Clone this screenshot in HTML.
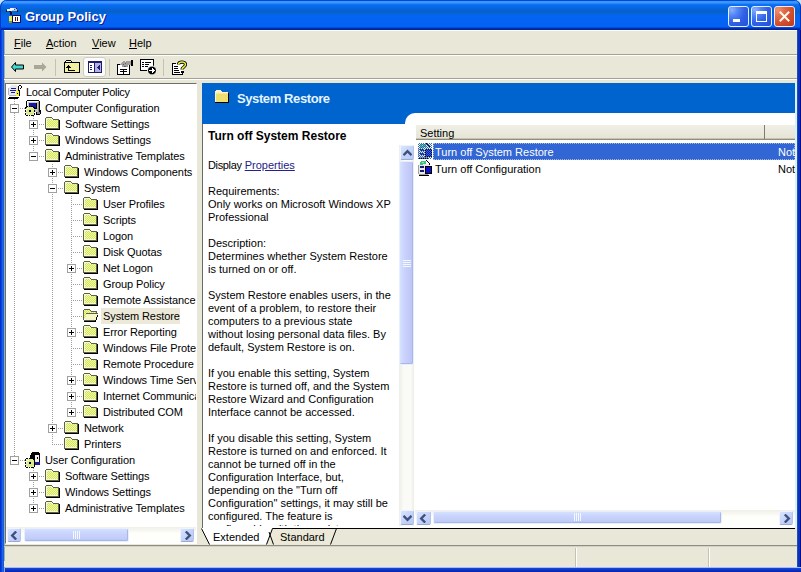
<!DOCTYPE html>
<html><head><meta charset="utf-8">
<style>
*{margin:0;padding:0;box-sizing:border-box}
html,body{width:801px;height:572px;overflow:hidden;background:#C4E6F8}
body{position:relative;font-family:"Liberation Sans",sans-serif;font-size:11px;color:#000}
.a{position:absolute}
svg{display:block}
#title{left:0;top:0;width:801px;height:30px;border-radius:7px 7px 0 0;box-shadow:inset 1px 0 0 #0038C8,inset -1px 0 0 #0030B8;
background:linear-gradient(to bottom,#0048D0 0px,#0048D0 1px,#3C98FF 1px,#3A96FF 3px,#1478F6 4px,#0A6CF0 5px,#0868EA 7px,#0464D4 9px,#0462CC 12px,#0464E0 14px,#0464F4 16px,#0462F2 27px,#0036BE 28px,#001C92 30px)}
#ttext{left:25px;top:8px;font-weight:bold;font-size:13px;color:#fff;text-shadow:1px 1px 0 #0A1B8C;line-height:17px}
.fl{background:#0A46DA}
.menu{top:35px;line-height:17px}
.u{text-decoration:underline}
.sep{background:#A4A294}
.ti{position:absolute;height:16px;line-height:16px;white-space:nowrap;letter-spacing:-0.1px}
.ti.sel{background:#ECE9D8;padding:0 1px 0 2px;line-height:16px}
.ic{position:absolute;width:16px;height:16px}
.ex{position:absolute;width:9px;height:9px;border:1px solid #A0A0A0;background:#fff}
.ex:before{content:"";position:absolute;left:1px;top:3px;width:5px;height:1px;background:#000}
.ex.p:after{content:"";position:absolute;left:3px;top:1px;width:1px;height:5px;background:#000}
.vd{position:absolute;width:1px;background-image:linear-gradient(to bottom,#A0A0A0 50%,transparent 50%);background-size:1px 2px}
.hd{position:absolute;height:1px;background-image:linear-gradient(to right,#A0A0A0 50%,transparent 50%);background-size:2px 1px}
.dl{line-height:13px;white-space:nowrap}
.sb{position:absolute;border-radius:2px;background:linear-gradient(135deg,#D8E4FE 0%,#C6D4FA 50%,#B8C8F4 100%);border-top:1px solid #EEF3FF;border-left:1px solid #EEF3FF;border-right:1px solid #B4C4EC;border-bottom:1px solid #9AAAD4}
.th{position:absolute;border-radius:2px;background:linear-gradient(to bottom,#D6E0FE 0%,#CAD6FC 30%,#C4CEFA 70%,#B8C6F2 100%);border:1px solid #E8EEFF;box-shadow:inset -1px -1px 0 #A8B8E4}
.tr{position:absolute;background:linear-gradient(to bottom,#F0EFE8,#FEFEFA 40%,#FEFEFA)}

</style></head><body>
<svg width="0" height="0" style="position:absolute"><defs><pattern id="fd" width="2" height="2" patternUnits="userSpaceOnUse"><rect width="2" height="2" fill="#F2F6B8"/><rect width="1" height="1" fill="#D2E84A"/><rect x="1" y="1" width="1" height="1" fill="#D2E84A"/></pattern></defs></svg>
<div class="a" id="title"></div>
<div class="a" style="left:6px;top:7px"><svg width="16" height="18" shape-rendering="crispEdges"><path fill="#F4F4F4" d="M1 2h3v2H1zM4 1h4v3H4z"/><path fill="#B8B8C8" d="M8 1h2v1H8zM9 2h2v2H9zM6 3h3v1H6z"/><path fill="#10104A" d="M0 3h1v2H0zM3 4h2v1H3zM10 1h1v1h-1zM11 3h1v2h-1zM4 5h2v3H4zM6 8h9v1H6zM6 9h1v7H6zM14 9h1v7h-1zM6 15h9v1H6z"/><path fill="#fff" d="M7 9h7v6H7z"/><path fill="#5A0A20" d="M9 10h1v4H9zM11 10h1v4h-1z"/><path fill="#E6EC50" d="M3 9h3v6H3z"/><path fill="#8A9A20" d="M3 14h3v2H3z"/></svg></div>
<div class="a" id="ttext">Group Policy</div>
<!-- caption buttons -->
<div class="a" style="left:728px;top:6px;width:21px;height:21px;border:1px solid #E4F0FF;border-radius:3px;background:radial-gradient(circle at 15% 15%,#88B0FF 0%,#5486F6 25%,#3062E6 55%,#2250D6 100%)"><div class="a" style="left:4px;top:12px;width:7px;height:3px;background:#fff"></div></div>
<div class="a" style="left:751px;top:6px;width:21px;height:21px;border:1px solid #E4F0FF;border-radius:3px;background:radial-gradient(circle at 15% 15%,#88B0FF 0%,#5486F6 25%,#3062E6 55%,#2250D6 100%)"><div class="a" style="left:4px;top:4px;width:11px;height:11px;border:1px solid #fff;border-top-width:3px"></div></div>
<div class="a" style="left:774px;top:6px;width:21px;height:21px;border:1px solid #F4E8F0;border-radius:3px;background:radial-gradient(circle at 15% 15%,#F09070 0%,#E06A48 30%,#D24E2C 60%,#C23818 100%)"><svg class="a" style="left:4px;top:4px" width="11" height="11"><path d="M1.5 1.5L9.5 9.5M9.5 1.5L1.5 9.5" stroke="#FFF8EE" stroke-width="2" stroke-linecap="square"/></svg></div>
<!-- frame -->

<div class="a" style="left:797px;top:30px;width:4px;height:542px;background:linear-gradient(to right,#2050B0 0,#2050B0 1px,#0A30C0 1px,#0A30C0 3px,#000C8C 3px,#000C8C 4px)"></div>
<div class="a" style="left:0;top:567px;width:801px;height:5px;background:linear-gradient(to bottom,#9CC0FF 0,#9CC0FF 1px,#1848DC 1px,#0C34C8 3px,#0A22A8 5px)"></div>
<div class="a" style="left:4px;top:30px;width:793px;height:537px;background:#E9E8D8"></div>
<div class="a" style="left:0;top:30px;width:5px;height:542px;background:linear-gradient(to right,#0030D0 0,#0030D0 1px,#0844E0 1px,#0844E0 2px,#1A64EA 2px,#1A64EA 3px,#1A5ECC 3px,#1A5ECC 4px,#98ACC8 4px,#98ACC8 5px)"></div>
<!-- menu -->
<div class="a" style="left:4px;top:30px;width:793px;height:1px;background:#FFFFFF"></div>
<div class="a menu" style="left:14px"><span class="u">F</span>ile</div>
<div class="a menu" style="left:46px"><span class="u">A</span>ction</div>
<div class="a menu" style="left:92px"><span class="u">V</span>iew</div>
<div class="a menu" style="left:129px"><span class="u">H</span>elp</div>
<div class="a sep" style="left:4px;top:54px;width:793px;height:1px"></div>
<div class="a" style="left:4px;top:55px;width:793px;height:1px;background:#fff"></div>
<!-- toolbar -->
<div class="a" style="left:55px;top:59px;width:1px;height:17px;background:#C5C2B2"></div>
<div class="a" style="left:109px;top:59px;width:1px;height:17px;background:#C5C2B2"></div>
<div class="a" style="left:163px;top:59px;width:1px;height:17px;background:#C5C2B2"></div>
<div class="a" style="left:83px;top:57px;width:23px;height:20px;border:1px solid #CFCDC0;border-radius:3px;background:#FCFCFA"></div>
<div class="a" id="tb_icons" style="left:4px;top:56px">
<svg class="a" style="left:7px;top:6px" width="14" height="12" shape-rendering="crispEdges"><path d="M4.5 0.5L0.5 5L4.5 9.5V7H12.5V3H4.5Z" fill="#3ED8D0" stroke="#000" stroke-width="1" shape-rendering="auto"/></svg>
<svg class="a" style="left:29px;top:6px" width="15" height="12"><path d="M1 3H9V0.5L13.5 5L9 9.5V7H1Z" fill="#A9A896"/></svg>
<svg class="a" style="left:60px;top:4px" width="16" height="14" shape-rendering="crispEdges"><path fill="#F2F0A0" d="M1 3h14v9H1z"/><path fill="#000" d="M2 0h5v1H2zM1 1h1v1H1zM7 1h1v1H7zM0 2h15v1H0zM0 3h1v10H0zM15 2h1v11h-1zM0 12h16v1H0zM4 5h1v6H4zM2 7h1v1H2zM3 6h1v2H3zM5 6h1v2H5zM6 7h1v1H6zM5 10h6v1H5z"/><path fill="#FAFAF0" d="M2 1h5v1H2z"/></svg>
<svg class="a" style="left:84px;top:5px" width="14" height="12" shape-rendering="crispEdges"><path fill="#1C1C70" d="M0 0h14v12H0z"/><path fill="#fff" d="M1 2h5v9H1z"/><path fill="#B4B0E4" d="M7 2h6v9H7z"/><path fill="#1C1C70" d="M2 4h2v1H2zM2 6h2v1H2zM2 8h2v1H2zM9 6h1v1H9zM10 5h1v3h-1zM11 4h1v5h-1z"/></svg>
<svg class="a" style="left:113px;top:4px" width="17" height="15" shape-rendering="crispEdges"><path fill="#fff" d="M1 5h11v9H1z"/><path fill="#000" d="M0 4h3v1H0zM0 5h1v10H0zM12 5h1v10h-1zM0 14h13v1H0zM3 9h7v1H3zM3 11h7v1H3zM6 9h1v5H6z"/><path fill="#A0A0A0" d="M6 1h2v1H6zM5 2h4v1H5zM4 3h6v1H4zM3 4h9v1H3zM5 5h6v2H5zM9 1h5v4H9z"/><path fill="#606060" d="M6 4h1v1H6zM8 3h1v1H8zM7 6h2v1H7z"/><path fill="#000" d="M14 0h2v6h-2z"/></svg>
<svg class="a" style="left:136px;top:3px" width="17" height="16" shape-rendering="crispEdges"><path fill="#fff" d="M1 1h12v10H1z"/><path fill="#000" d="M0 0h14v1H0zM0 1h1v11H0zM13 1h1v6h-1zM0 11h7v1H0zM2 3h2v1H2zM5 3h6v1H5zM2 5h2v1H2zM5 5h4v1H5zM2 7h2v1H2zM5 7h3v1H5z"/><circle cx="12" cy="11.5" r="4.5" fill="#000" stroke="#fff" stroke-width="1" shape-rendering="auto"/><path fill="#fff" d="M9 11h3v1H9zM12 9h1v5h-1zM13 10h1v3h-1zM14 11h1v1h-1z"/></svg>
<svg class="a" style="left:168px;top:4px" width="15" height="15" shape-rendering="crispEdges"><path fill="#fff" d="M1 4h10v10H1z"/><path fill="#000" d="M0 3h4v1H0zM0 4h1v11H0zM10 11h1v4h-1zM0 14h11v1H0zM2 6h4v1H2zM2 8h4v1H2zM2 10h5v1H2zM2 12h6v1H2z"/><path d="M6.5 4.5C6.5 1.5 13.5 1 13.5 4.5C13.5 7 10 7 10 9.5" fill="none" stroke="#000" stroke-width="3.2" shape-rendering="auto"/><path d="M6.5 4.5C6.5 1.5 13.5 1 13.5 4.5C13.5 7 10 7 10 9.5" fill="none" stroke="#E4EC40" stroke-width="1.6" shape-rendering="auto"/><path fill="#000" d="M9 11h3v2H9z"/></svg>
</div>
<div class="a sep" style="left:4px;top:78px;width:793px;height:1px"></div>
<div class="a" style="left:4px;top:79px;width:793px;height:1px;background:#fff"></div>
<!-- tree frame -->
<div class="a" style="left:5px;top:83px;width:192px;height:461px;border-top:1px solid #6A706C;border-left:1px solid #6A706C;border-right:1px solid #FFF;border-bottom:1px solid #FFF;background:#fff"></div>
<!-- status bar -->
<div class="a" style="left:4px;top:545px;width:793px;height:1px;background:#8E8D82"></div>
<div class="a" style="left:4px;top:546px;width:793px;height:1px;background:#D2D1C4"></div>
<div class="a" style="left:4px;top:561px;width:793px;height:6px;background:linear-gradient(to bottom,#E9E8D8,#EEE6D8)"></div>
<div class="a" style="left:575px;top:548px;width:1px;height:19px;background:#C5C2B2"></div>
<div class="a" style="left:576px;top:548px;width:1px;height:19px;background:#fff"></div>
<div class="a" style="left:708px;top:548px;width:1px;height:19px;background:#C5C2B2"></div>
<div class="a" style="left:709px;top:548px;width:1px;height:19px;background:#fff"></div>
<div class="a" style="left:6px;top:84px;width:190px;height:443px;overflow:hidden;background:#fff">
<div class="vd" style="left:8px;top:15px;height:361px"></div>
<div class="vd" style="left:27px;top:32px;height:40px"></div>
<div class="vd" style="left:27px;top:384px;height:40px"></div>
<div class="vd" style="left:46px;top:80px;height:280px"></div>
<div class="vd" style="left:65px;top:112px;height:216px"></div>
<div class="ic" style="left:2px;top:0px"><svg width="16" height="16" shape-rendering="crispEdges"><path fill="#E8E8EE" d="M3 1h6v1H3zM2 2h8v1H2zM1 3h9v9H1z"/><path fill="#B4B4C0" d="M0 4h1v7H0zM1 11h7v1H1z"/><path fill="#1A1A9A" d="M3 4h5v1H3zM2 6h6v1H2zM3 8h4v1H3z"/><path fill="#F0F040" d="M8 6h3v6H8z"/><path fill="#000" d="M10 2h1v1h-1zM11 1h2v1h-2zM13 2h1v2h-1zM12 4h1v1h-1zM10 3h1v4h-1zM11 6h1v6h-1zM9 9h1v1H9zM1 13h10v1H1zM0 14h10v1H0z"/><path fill="#fff" d="M11 2h2v2h-2z"/></svg>
</div>
<div class="ti" style="left:20px;top:0px;letter-spacing:-0.3px">Local Computer Policy</div>
<div class="hd" style="left:8px;top:24px;width:11px"></div>
<div class="ex" style="left:4px;top:20px"></div>
<div class="ic" style="left:19px;top:16px"><svg width="16" height="16" shape-rendering="crispEdges"><path fill="#000" d="M2 0h12v1H2zM1 1h1v10H1zM14 1h1v12h-1zM11 12h4v1h-4zM11 13h1v2h-1zM15 10h1v4h-1zM12 14h3v1h-3z"/><path fill="#C8C8C8" d="M2 1h12v11H2z"/><path fill="#fff" d="M2 1h11v1H2zM2 2h1v7H2z"/><path fill="#909090" d="M13 2h1v10h-1zM12 12h3v2h-3z"/><path fill="#1818A8" d="M4 3h7v5H4z"/><path fill="#000" d="M4 8h7v1H4zM11 3h1v6h-1z"/><path fill="#DDEB8C" d="M2 7h6v1h-6zM1 8h8v6h-8zM2 14h6v1h-6z"/><path fill="#F6FCD0" d="M2 8h2v1h-2zM1 9h1v2h-1z"/><path fill="#000" d="M1 6h1v1h-1zM4 6h1v1h-1zM7 6h1v1h-1zM0 7h1v1h-1zM8 7h1v1h-1zM0 10h1v1h-1zM9 10h1v1h-1zM0 11h1v1h-1zM9 11h1v1h-1zM0 14h1v1h-1zM9 14h1v1h-1zM1 15h1v1h-1zM4 15h1v1h-1zM7 15h1v1h-1zM4 10h1v1h-1zM5 10h1v1h-1zM4 11h1v1h-1zM5 11h1v1h-1zM2 6h1v1h-1zM6 6h1v1h-1zM0 8h1v1h-1zM0 13h1v1h-1zM9 8h1v1h-1zM9 13h1v1h-1zM2 15h1v1h-1zM6 15h1v1h-1zM8 15h1v1h-1zM9 7h1v1h-1z"/></svg>
</div>
<div class="ti" style="left:39px;top:16px">Computer Configuration</div>
<div class="hd" style="left:27px;top:40px;width:12px"></div>
<div class="ex p" style="left:23px;top:36px"></div>
<div class="ic" style="left:39px;top:32px"><svg width="16" height="16" shape-rendering="crispEdges"><path fill="url(#fd)" d="M2 3h11v9H2z"/><path fill="#F6F8D0" d="M1 2h6v1H1zM1 3h1v9H1zM7 3h6v1H7zM2 11h11v1H2z"/><path fill="#5E604A" d="M1 1h6v1H1zM0 2h1v10H0zM7 2h1v1H7zM8 3h5v1H8zM13 3h1v10h-1zM0 12h14v1H0z"/><path fill="#000" d="M14 4h1v10h-1zM1 13h14v1H1z"/></svg>
</div>
<div class="ti" style="left:59px;top:32px">Software Settings</div>
<div class="hd" style="left:27px;top:56px;width:12px"></div>
<div class="ex p" style="left:23px;top:52px"></div>
<div class="ic" style="left:39px;top:48px"><svg width="16" height="16" shape-rendering="crispEdges"><path fill="url(#fd)" d="M2 3h11v9H2z"/><path fill="#F6F8D0" d="M1 2h6v1H1zM1 3h1v9H1zM7 3h6v1H7zM2 11h11v1H2z"/><path fill="#5E604A" d="M1 1h6v1H1zM0 2h1v10H0zM7 2h1v1H7zM8 3h5v1H8zM13 3h1v10h-1zM0 12h14v1H0z"/><path fill="#000" d="M14 4h1v10h-1zM1 13h14v1H1z"/></svg>
</div>
<div class="ti" style="left:59px;top:48px">Windows Settings</div>
<div class="hd" style="left:27px;top:72px;width:12px"></div>
<div class="ex" style="left:23px;top:68px"></div>
<div class="ic" style="left:39px;top:64px"><svg width="16" height="16" shape-rendering="crispEdges"><path fill="url(#fd)" d="M2 3h11v9H2z"/><path fill="#F6F8D0" d="M1 2h6v1H1zM1 3h1v9H1zM7 3h6v1H7zM2 11h11v1H2z"/><path fill="#5E604A" d="M1 1h6v1H1zM0 2h1v10H0zM7 2h1v1H7zM8 3h5v1H8zM13 3h1v10h-1zM0 12h14v1H0z"/><path fill="#000" d="M14 4h1v10h-1zM1 13h14v1H1z"/></svg>
</div>
<div class="ti" style="left:59px;top:64px">Administrative Templates</div>
<div class="hd" style="left:46px;top:88px;width:12px"></div>
<div class="ex p" style="left:42px;top:84px"></div>
<div class="ic" style="left:58px;top:80px"><svg width="16" height="16" shape-rendering="crispEdges"><path fill="url(#fd)" d="M2 3h11v9H2z"/><path fill="#F6F8D0" d="M1 2h6v1H1zM1 3h1v9H1zM7 3h6v1H7zM2 11h11v1H2z"/><path fill="#5E604A" d="M1 1h6v1H1zM0 2h1v10H0zM7 2h1v1H7zM8 3h5v1H8zM13 3h1v10h-1zM0 12h14v1H0z"/><path fill="#000" d="M14 4h1v10h-1zM1 13h14v1H1z"/></svg>
</div>
<div class="ti" style="left:78px;top:80px">Windows Components</div>
<div class="hd" style="left:46px;top:104px;width:12px"></div>
<div class="ex" style="left:42px;top:100px"></div>
<div class="ic" style="left:58px;top:96px"><svg width="16" height="16" shape-rendering="crispEdges"><path fill="url(#fd)" d="M2 3h11v9H2z"/><path fill="#F6F8D0" d="M1 2h6v1H1zM1 3h1v9H1zM7 3h6v1H7zM2 11h11v1H2z"/><path fill="#5E604A" d="M1 1h6v1H1zM0 2h1v10H0zM7 2h1v1H7zM8 3h5v1H8zM13 3h1v10h-1zM0 12h14v1H0z"/><path fill="#000" d="M14 4h1v10h-1zM1 13h14v1H1z"/></svg>
</div>
<div class="ti" style="left:78px;top:96px">System</div>
<div class="hd" style="left:65px;top:120px;width:12px"></div>
<div class="ic" style="left:77px;top:112px"><svg width="16" height="16" shape-rendering="crispEdges"><path fill="url(#fd)" d="M2 3h11v9H2z"/><path fill="#F6F8D0" d="M1 2h6v1H1zM1 3h1v9H1zM7 3h6v1H7zM2 11h11v1H2z"/><path fill="#5E604A" d="M1 1h6v1H1zM0 2h1v10H0zM7 2h1v1H7zM8 3h5v1H8zM13 3h1v10h-1zM0 12h14v1H0z"/><path fill="#000" d="M14 4h1v10h-1zM1 13h14v1H1z"/></svg>
</div>
<div class="ti" style="left:97px;top:112px">User Profiles</div>
<div class="hd" style="left:65px;top:136px;width:12px"></div>
<div class="ic" style="left:77px;top:128px"><svg width="16" height="16" shape-rendering="crispEdges"><path fill="url(#fd)" d="M2 3h11v9H2z"/><path fill="#F6F8D0" d="M1 2h6v1H1zM1 3h1v9H1zM7 3h6v1H7zM2 11h11v1H2z"/><path fill="#5E604A" d="M1 1h6v1H1zM0 2h1v10H0zM7 2h1v1H7zM8 3h5v1H8zM13 3h1v10h-1zM0 12h14v1H0z"/><path fill="#000" d="M14 4h1v10h-1zM1 13h14v1H1z"/></svg>
</div>
<div class="ti" style="left:97px;top:128px">Scripts</div>
<div class="hd" style="left:65px;top:152px;width:12px"></div>
<div class="ic" style="left:77px;top:144px"><svg width="16" height="16" shape-rendering="crispEdges"><path fill="url(#fd)" d="M2 3h11v9H2z"/><path fill="#F6F8D0" d="M1 2h6v1H1zM1 3h1v9H1zM7 3h6v1H7zM2 11h11v1H2z"/><path fill="#5E604A" d="M1 1h6v1H1zM0 2h1v10H0zM7 2h1v1H7zM8 3h5v1H8zM13 3h1v10h-1zM0 12h14v1H0z"/><path fill="#000" d="M14 4h1v10h-1zM1 13h14v1H1z"/></svg>
</div>
<div class="ti" style="left:97px;top:144px">Logon</div>
<div class="hd" style="left:65px;top:168px;width:12px"></div>
<div class="ic" style="left:77px;top:160px"><svg width="16" height="16" shape-rendering="crispEdges"><path fill="url(#fd)" d="M2 3h11v9H2z"/><path fill="#F6F8D0" d="M1 2h6v1H1zM1 3h1v9H1zM7 3h6v1H7zM2 11h11v1H2z"/><path fill="#5E604A" d="M1 1h6v1H1zM0 2h1v10H0zM7 2h1v1H7zM8 3h5v1H8zM13 3h1v10h-1zM0 12h14v1H0z"/><path fill="#000" d="M14 4h1v10h-1zM1 13h14v1H1z"/></svg>
</div>
<div class="ti" style="left:97px;top:160px">Disk Quotas</div>
<div class="hd" style="left:65px;top:184px;width:12px"></div>
<div class="ex p" style="left:61px;top:180px"></div>
<div class="ic" style="left:77px;top:176px"><svg width="16" height="16" shape-rendering="crispEdges"><path fill="url(#fd)" d="M2 3h11v9H2z"/><path fill="#F6F8D0" d="M1 2h6v1H1zM1 3h1v9H1zM7 3h6v1H7zM2 11h11v1H2z"/><path fill="#5E604A" d="M1 1h6v1H1zM0 2h1v10H0zM7 2h1v1H7zM8 3h5v1H8zM13 3h1v10h-1zM0 12h14v1H0z"/><path fill="#000" d="M14 4h1v10h-1zM1 13h14v1H1z"/></svg>
</div>
<div class="ti" style="left:97px;top:176px">Net Logon</div>
<div class="hd" style="left:65px;top:200px;width:12px"></div>
<div class="ic" style="left:77px;top:192px"><svg width="16" height="16" shape-rendering="crispEdges"><path fill="url(#fd)" d="M2 3h11v9H2z"/><path fill="#F6F8D0" d="M1 2h6v1H1zM1 3h1v9H1zM7 3h6v1H7zM2 11h11v1H2z"/><path fill="#5E604A" d="M1 1h6v1H1zM0 2h1v10H0zM7 2h1v1H7zM8 3h5v1H8zM13 3h1v10h-1zM0 12h14v1H0z"/><path fill="#000" d="M14 4h1v10h-1zM1 13h14v1H1z"/></svg>
</div>
<div class="ti" style="left:97px;top:192px">Group Policy</div>
<div class="hd" style="left:65px;top:216px;width:12px"></div>
<div class="ic" style="left:77px;top:208px"><svg width="16" height="16" shape-rendering="crispEdges"><path fill="url(#fd)" d="M2 3h11v9H2z"/><path fill="#F6F8D0" d="M1 2h6v1H1zM1 3h1v9H1zM7 3h6v1H7zM2 11h11v1H2z"/><path fill="#5E604A" d="M1 1h6v1H1zM0 2h1v10H0zM7 2h1v1H7zM8 3h5v1H8zM13 3h1v10h-1zM0 12h14v1H0z"/><path fill="#000" d="M14 4h1v10h-1zM1 13h14v1H1z"/></svg>
</div>
<div class="ti" style="left:97px;top:208px">Remote Assistance</div>
<div class="hd" style="left:65px;top:232px;width:12px"></div>
<div class="ic" style="left:77px;top:224px"><svg width="16" height="16" shape-rendering="crispEdges"><path fill="url(#fd)" d="M1 2h7v1h5v3H4l-3 6z"/><path fill="#F4F6C8" d="M4 6h11l-3 7H1z"/><path fill="#5E604A" d="M1 1h6v1H1zM0 2h1v10H0zM7 2h1v1H7zM8 3h5v1H8zM13 3h1v3h-1zM3 5h12v1H3zM1 12h11v1H1z"/><path fill="#000" d="M12 12h1v1h-1zM13 9h1v3h-1zM14 7h1v2h-1zM1 13h12v1H1z"/></svg>
</div>
<div class="a" style="left:95px;top:224px;width:79px;height:16px;background:#ECE9D8"></div>
<div class="ti" style="left:97px;top:224px">System Restore</div>
<div class="hd" style="left:65px;top:248px;width:12px"></div>
<div class="ex p" style="left:61px;top:244px"></div>
<div class="ic" style="left:77px;top:240px"><svg width="16" height="16" shape-rendering="crispEdges"><path fill="url(#fd)" d="M2 3h11v9H2z"/><path fill="#F6F8D0" d="M1 2h6v1H1zM1 3h1v9H1zM7 3h6v1H7zM2 11h11v1H2z"/><path fill="#5E604A" d="M1 1h6v1H1zM0 2h1v10H0zM7 2h1v1H7zM8 3h5v1H8zM13 3h1v10h-1zM0 12h14v1H0z"/><path fill="#000" d="M14 4h1v10h-1zM1 13h14v1H1z"/></svg>
</div>
<div class="ti" style="left:97px;top:240px">Error Reporting</div>
<div class="hd" style="left:65px;top:264px;width:12px"></div>
<div class="ic" style="left:77px;top:256px"><svg width="16" height="16" shape-rendering="crispEdges"><path fill="url(#fd)" d="M2 3h11v9H2z"/><path fill="#F6F8D0" d="M1 2h6v1H1zM1 3h1v9H1zM7 3h6v1H7zM2 11h11v1H2z"/><path fill="#5E604A" d="M1 1h6v1H1zM0 2h1v10H0zM7 2h1v1H7zM8 3h5v1H8zM13 3h1v10h-1zM0 12h14v1H0z"/><path fill="#000" d="M14 4h1v10h-1zM1 13h14v1H1z"/></svg>
</div>
<div class="ti" style="left:97px;top:256px">Windows File Protection</div>
<div class="hd" style="left:65px;top:280px;width:12px"></div>
<div class="ic" style="left:77px;top:272px"><svg width="16" height="16" shape-rendering="crispEdges"><path fill="url(#fd)" d="M2 3h11v9H2z"/><path fill="#F6F8D0" d="M1 2h6v1H1zM1 3h1v9H1zM7 3h6v1H7zM2 11h11v1H2z"/><path fill="#5E604A" d="M1 1h6v1H1zM0 2h1v10H0zM7 2h1v1H7zM8 3h5v1H8zM13 3h1v10h-1zM0 12h14v1H0z"/><path fill="#000" d="M14 4h1v10h-1zM1 13h14v1H1z"/></svg>
</div>
<div class="ti" style="left:97px;top:272px">Remote Procedure Call</div>
<div class="hd" style="left:65px;top:296px;width:12px"></div>
<div class="ex p" style="left:61px;top:292px"></div>
<div class="ic" style="left:77px;top:288px"><svg width="16" height="16" shape-rendering="crispEdges"><path fill="url(#fd)" d="M2 3h11v9H2z"/><path fill="#F6F8D0" d="M1 2h6v1H1zM1 3h1v9H1zM7 3h6v1H7zM2 11h11v1H2z"/><path fill="#5E604A" d="M1 1h6v1H1zM0 2h1v10H0zM7 2h1v1H7zM8 3h5v1H8zM13 3h1v10h-1zM0 12h14v1H0z"/><path fill="#000" d="M14 4h1v10h-1zM1 13h14v1H1z"/></svg>
</div>
<div class="ti" style="left:97px;top:288px">Windows Time Service</div>
<div class="hd" style="left:65px;top:312px;width:12px"></div>
<div class="ex p" style="left:61px;top:308px"></div>
<div class="ic" style="left:77px;top:304px"><svg width="16" height="16" shape-rendering="crispEdges"><path fill="url(#fd)" d="M2 3h11v9H2z"/><path fill="#F6F8D0" d="M1 2h6v1H1zM1 3h1v9H1zM7 3h6v1H7zM2 11h11v1H2z"/><path fill="#5E604A" d="M1 1h6v1H1zM0 2h1v10H0zM7 2h1v1H7zM8 3h5v1H8zM13 3h1v10h-1zM0 12h14v1H0z"/><path fill="#000" d="M14 4h1v10h-1zM1 13h14v1H1z"/></svg>
</div>
<div class="ti" style="left:97px;top:304px">Internet Communication Management</div>
<div class="hd" style="left:65px;top:328px;width:12px"></div>
<div class="ex p" style="left:61px;top:324px"></div>
<div class="ic" style="left:77px;top:320px"><svg width="16" height="16" shape-rendering="crispEdges"><path fill="url(#fd)" d="M2 3h11v9H2z"/><path fill="#F6F8D0" d="M1 2h6v1H1zM1 3h1v9H1zM7 3h6v1H7zM2 11h11v1H2z"/><path fill="#5E604A" d="M1 1h6v1H1zM0 2h1v10H0zM7 2h1v1H7zM8 3h5v1H8zM13 3h1v10h-1zM0 12h14v1H0z"/><path fill="#000" d="M14 4h1v10h-1zM1 13h14v1H1z"/></svg>
</div>
<div class="ti" style="left:97px;top:320px">Distributed COM</div>
<div class="hd" style="left:46px;top:344px;width:12px"></div>
<div class="ex p" style="left:42px;top:340px"></div>
<div class="ic" style="left:58px;top:336px"><svg width="16" height="16" shape-rendering="crispEdges"><path fill="url(#fd)" d="M2 3h11v9H2z"/><path fill="#F6F8D0" d="M1 2h6v1H1zM1 3h1v9H1zM7 3h6v1H7zM2 11h11v1H2z"/><path fill="#5E604A" d="M1 1h6v1H1zM0 2h1v10H0zM7 2h1v1H7zM8 3h5v1H8zM13 3h1v10h-1zM0 12h14v1H0z"/><path fill="#000" d="M14 4h1v10h-1zM1 13h14v1H1z"/></svg>
</div>
<div class="ti" style="left:78px;top:336px">Network</div>
<div class="hd" style="left:46px;top:360px;width:12px"></div>
<div class="ic" style="left:58px;top:352px"><svg width="16" height="16" shape-rendering="crispEdges"><path fill="url(#fd)" d="M2 3h11v9H2z"/><path fill="#F6F8D0" d="M1 2h6v1H1zM1 3h1v9H1zM7 3h6v1H7zM2 11h11v1H2z"/><path fill="#5E604A" d="M1 1h6v1H1zM0 2h1v10H0zM7 2h1v1H7zM8 3h5v1H8zM13 3h1v10h-1zM0 12h14v1H0z"/><path fill="#000" d="M14 4h1v10h-1zM1 13h14v1H1z"/></svg>
</div>
<div class="ti" style="left:78px;top:352px">Printers</div>
<div class="hd" style="left:8px;top:376px;width:11px"></div>
<div class="ex" style="left:4px;top:372px"></div>
<div class="ic" style="left:19px;top:368px"><svg width="16" height="16" shape-rendering="crispEdges"><path fill="#000" d="M7 0h7v1H7zM6 1h9v2H6zM5 3h6v4H5zM6 7h4v6H6zM14 3h1v7h-1z"/><path fill="#F6EEF4" d="M10 3h4v7h-4z"/><path fill="#000" d="M12 5h1v2h-1z"/><path fill="#202090" d="M10 10h5v3h-5z"/><path fill="#DDEB8C" d="M2 7h6v1h-6zM1 8h8v6h-8zM2 14h6v1h-6z"/><path fill="#F6FCD0" d="M2 8h2v1h-2zM1 9h1v2h-1z"/><path fill="#000" d="M1 6h1v1h-1zM4 6h1v1h-1zM7 6h1v1h-1zM0 7h1v1h-1zM8 7h1v1h-1zM0 10h1v1h-1zM9 10h1v1h-1zM0 11h1v1h-1zM9 11h1v1h-1zM0 14h1v1h-1zM9 14h1v1h-1zM1 15h1v1h-1zM4 15h1v1h-1zM7 15h1v1h-1zM4 10h1v1h-1zM5 10h1v1h-1zM4 11h1v1h-1zM5 11h1v1h-1zM2 6h1v1h-1zM6 6h1v1h-1zM0 8h1v1h-1zM0 13h1v1h-1zM9 8h1v1h-1zM9 13h1v1h-1zM2 15h1v1h-1zM6 15h1v1h-1zM8 15h1v1h-1zM9 7h1v1h-1z"/></svg>
</div>
<div class="ti" style="left:39px;top:368px">User Configuration</div>
<div class="hd" style="left:27px;top:392px;width:12px"></div>
<div class="ex p" style="left:23px;top:388px"></div>
<div class="ic" style="left:39px;top:384px"><svg width="16" height="16" shape-rendering="crispEdges"><path fill="url(#fd)" d="M2 3h11v9H2z"/><path fill="#F6F8D0" d="M1 2h6v1H1zM1 3h1v9H1zM7 3h6v1H7zM2 11h11v1H2z"/><path fill="#5E604A" d="M1 1h6v1H1zM0 2h1v10H0zM7 2h1v1H7zM8 3h5v1H8zM13 3h1v10h-1zM0 12h14v1H0z"/><path fill="#000" d="M14 4h1v10h-1zM1 13h14v1H1z"/></svg>
</div>
<div class="ti" style="left:59px;top:384px">Software Settings</div>
<div class="hd" style="left:27px;top:408px;width:12px"></div>
<div class="ex p" style="left:23px;top:404px"></div>
<div class="ic" style="left:39px;top:400px"><svg width="16" height="16" shape-rendering="crispEdges"><path fill="url(#fd)" d="M2 3h11v9H2z"/><path fill="#F6F8D0" d="M1 2h6v1H1zM1 3h1v9H1zM7 3h6v1H7zM2 11h11v1H2z"/><path fill="#5E604A" d="M1 1h6v1H1zM0 2h1v10H0zM7 2h1v1H7zM8 3h5v1H8zM13 3h1v10h-1zM0 12h14v1H0z"/><path fill="#000" d="M14 4h1v10h-1zM1 13h14v1H1z"/></svg>
</div>
<div class="ti" style="left:59px;top:400px">Windows Settings</div>
<div class="hd" style="left:27px;top:424px;width:12px"></div>
<div class="ex p" style="left:23px;top:420px"></div>
<div class="ic" style="left:39px;top:416px"><svg width="16" height="16" shape-rendering="crispEdges"><path fill="url(#fd)" d="M2 3h11v9H2z"/><path fill="#F6F8D0" d="M1 2h6v1H1zM1 3h1v9H1zM7 3h6v1H7zM2 11h11v1H2z"/><path fill="#5E604A" d="M1 1h6v1H1zM0 2h1v10H0zM7 2h1v1H7zM8 3h5v1H8zM13 3h1v10h-1zM0 12h14v1H0z"/><path fill="#000" d="M14 4h1v10h-1zM1 13h14v1H1z"/></svg>
</div>
<div class="ti" style="left:59px;top:416px">Administrative Templates</div>
</div>
<!-- tree hscroll -->
<div class="tr" style="left:6px;top:527px;width:190px;height:16px"></div>
<div class="sb" style="left:7px;top:528px;width:14px;height:14px"><svg class="a" style="left:2px;top:2px" width="9" height="9"><path d="M6.2 0.5L2.2 4.5L6.2 8.5" stroke="#3E507E" stroke-width="2.4" fill="none"/></svg></div>
<div class="th" style="left:24px;top:528px;width:105px;height:14px"></div><div class="a" style="left:73px;top:531px;width:7px;height:8px;background:repeating-linear-gradient(to right,#F4F8FF 0,#F4F8FF 1px,transparent 1px,transparent 2px)"></div>
<div class="sb" style="left:180px;top:528px;width:14px;height:14px"><svg class="a" style="left:3px;top:2px" width="9" height="9"><path d="M1.8 0.5L5.8 4.5L1.8 8.5" stroke="#3E507E" stroke-width="2.4" fill="none"/></svg></div>

<!-- right pane -->

<div class="a" style="left:202px;top:83px;width:593px;height:445px;background:#0064CE"></div>
<div class="a" style="left:202px;top:124px;width:212px;height:404px;background:#fff;border-left:1px solid #646C66"></div>
<div class="a" style="left:405px;top:113px;width:390px;height:415px;background:#fff;border-top-left-radius:10px"></div>
<div class="a" style="left:795px;top:83px;width:2px;height:445px;background:#D8F0FA"></div>
<div class="a" style="left:214px;top:89px"><svg width="16" height="16" shape-rendering="crispEdges"><path fill="#FAF4C8" d="M2 1h5v1h1v1h6v1H2v9H1V2h1z"/><path fill="#EEDE70" d="M2 4h12v9H2z"/><path fill="#F4E89A" d="M2 4h12v1H2z"/><path fill="#000" d="M14 4h1v10h-1zM1 13h14v1H1z"/></svg></div>
<div class="a" style="left:237px;top:90px;font-weight:bold;font-size:13px;letter-spacing:-0.4px;color:#E6F4FF;line-height:17px">System Restore</div>

<!-- description -->
<div class="a" style="left:203px;top:124px;width:196px;height:402px;overflow:hidden">
<div class="a" style="left:5px;top:4px;font-weight:bold;font-size:12px;line-height:16px;white-space:nowrap">Turn off System Restore</div>
<div class="a dl" style="left:5px;top:35px"><span style="letter-spacing:-0.35px">Display</span> <span style="color:#22228A;text-decoration:underline">Properties</span><br><br>Requirements:<br>Only works on Microsoft Windows XP<br>Professional<br><br>Description:<br>Determines whether System Restore<br>is turned on or off.<br><br>System Restore enables users, in the<br>event of a problem, to restore their<br>computers to a previous state<br>without losing personal data files. By<br>default, System Restore is on.<br><br>If you enable this setting, System<br>Restore is turned off, and the System<br>Restore Wizard and Configuration<br>Interface cannot be accessed.<br><br>If you disable this setting, System<br>Restore is turned on and enforced. It<br>cannot be turned off in the<br>Configuration Interface, but,<br>depending on the "Turn off<br>Configuration" settings, it may still be<br>configured. The feature is<br>configurable with the registry</div>
</div>
<!-- desc vscroll -->
<div class="tr" style="left:399px;top:145px;width:15px;height:381px;background:linear-gradient(to right,#EEEEE8,#FAFAF6 30%,#FAFAF6 80%,#EEEEE8)"></div>
<div class="sb" style="left:400px;top:145px;width:14px;height:15px"><svg class="a" style="left:2px;top:3px" width="9" height="9"><path d="M0.5 6.2L4.5 2.2L8.5 6.2" stroke="#3E507E" stroke-width="2.4" fill="none"/></svg></div>
<div class="th" style="left:399px;top:161px;width:15px;height:204px;background:linear-gradient(to right,#D4E2FE 0%,#CAD2FC 35%,#C6CAFA 65%,#B8C8F0 100%)"></div><div class="a" style="left:403px;top:260px;width:8px;height:7px;background:repeating-linear-gradient(to bottom,#F4F8FF 0,#F4F8FF 1px,transparent 1px,transparent 2px)"></div>
<div class="sb" style="left:400px;top:510px;width:14px;height:15px"><svg class="a" style="left:2px;top:3px" width="9" height="9"><path d="M0.5 1.8L4.5 5.8L8.5 1.8" stroke="#3E507E" stroke-width="2.4" fill="none"/></svg></div>

<!-- list -->
<div class="a" style="left:416px;top:125px;width:379px;height:15px;background:linear-gradient(to bottom,#F0EFE6,#E6E4D6);border-bottom:1px solid #8E8C7E;box-shadow:inset 0 -1px 0 #C7C5B2"></div>
<div class="a" style="left:764px;top:125px;width:1px;height:14px;background:#7E7C70"></div>
<div class="a" style="left:420px;top:126px;line-height:15px">Setting</div>
<div class="a" style="left:417px;top:143px"><svg width="16" height="16" shape-rendering="crispEdges"><defs><pattern id="dz" width="2" height="2" patternUnits="userSpaceOnUse"><rect width="1" height="1" fill="#316AC5"/><rect x="1" y="1" width="1" height="1" fill="#316AC5"/></pattern></defs><g><path fill="#E8E8E8" d="M2 4h10v11H2z"/><path fill="#A0A0A0" d="M1 5h1v9H1zM2 14h9v1H2z"/><path fill="#40C078" d="M4 1h5v1H4zM3 2h6v2H3zM3 4h3v1H3z"/><path fill="#A0E0B0" d="M5 2h2v1H5z"/><path fill="#000" d="M9 0h1v1H9zM10 1h1v1h-1zM11 2h1v1h-1zM12 3h1v2h-1zM2 15h10v1H2z"/><path fill="#1A1A70" d="M3 6h4v2H3zM3 10h4v2H3z"/><path fill="#000" d="M8 6h7v1H8zM8 7h1v7H8zM14 7h1v7h-1zM8 13h7v1H8z"/><path fill="#1010C8" d="M9 7h5v6H9z"/></g><path fill="url(#dz)" d="M1 0h14v16H1z"/></svg></div>
<div class="a" style="left:433px;top:143px;width:362px;height:17px;background:#3266D4;outline:1px dotted #A8B8D8;outline-offset:-1px"></div>
<div class="a" style="left:435px;top:144px;line-height:16px;color:#fff">Turn off System Restore</div>
<div class="a" style="left:778px;top:144px;line-height:16px;color:#fff;width:17px;overflow:hidden">Not</div>
<div class="a" style="left:417px;top:160px"><svg width="16" height="16" shape-rendering="crispEdges"><path fill="#E8E8E8" d="M2 4h10v11H2z"/><path fill="#A0A0A0" d="M1 5h1v9H1zM2 14h9v1H2z"/><path fill="#40C078" d="M4 1h5v1H4zM3 2h6v2H3zM3 4h3v1H3z"/><path fill="#A0E0B0" d="M5 2h2v1H5z"/><path fill="#000" d="M9 0h1v1H9zM10 1h1v1h-1zM11 2h1v1h-1zM12 3h1v2h-1zM2 15h10v1H2z"/><path fill="#1A1A70" d="M3 6h4v2H3zM3 10h4v2H3z"/><path fill="#000" d="M8 6h7v1H8zM8 7h1v7H8zM14 7h1v7h-1zM8 13h7v1H8z"/><path fill="#1010C8" d="M9 7h5v6H9z"/></svg></div>
<div class="a" style="left:435px;top:161px;line-height:16px">Turn off Configuration</div>
<div class="a" style="left:778px;top:161px;line-height:16px;width:17px;overflow:hidden">Not</div>

<!-- list hscroll -->
<div class="tr" style="left:415px;top:510px;width:380px;height:16px"></div>
<div class="sb" style="left:416px;top:511px;width:15px;height:14px"><svg class="a" style="left:2px;top:2px" width="9" height="9"><path d="M6.2 0.5L2.2 4.5L6.2 8.5" stroke="#3E507E" stroke-width="2.4" fill="none"/></svg></div>
<div class="th" style="left:433px;top:511px;width:289px;height:13px"></div><div class="a" style="left:574px;top:513px;width:7px;height:8px;background:repeating-linear-gradient(to right,#F4F8FF 0,#F4F8FF 1px,transparent 1px,transparent 2px)"></div>
<div class="sb" style="left:779px;top:511px;width:14px;height:14px"><svg class="a" style="left:3px;top:2px" width="9" height="9"><path d="M1.8 0.5L5.8 4.5L1.8 8.5" stroke="#3E507E" stroke-width="2.4" fill="none"/></svg></div>

<!-- bottom line + tabs -->
<div class="a" style="left:336px;top:528px;width:459px;height:1px;background:#000"></div>
<svg class="a" style="left:196px;top:526px" width="150" height="20">
<path d="M5 2H76L70 18H13Z" fill="#fff"/>
<path d="M76 2H140L134 18H70Z" fill="#ECE9D8"/>
<path d="M76.5 2.5H140.5M140.5 2.5L134.5 18.5M73 6L77.5 18.5" stroke="#000" stroke-width="1" fill="none"/>
<path d="M5.5 2.5L13.5 18.5M76.5 2.5L70.5 18.5" stroke="#000" stroke-width="1" fill="none"/>
<text x="17" y="14.5" font-family="Liberation Sans" font-size="11">Extended</text>
<text x="84" y="14.5" font-family="Liberation Sans" font-size="11">Standard</text>
</svg>
</body></html>
